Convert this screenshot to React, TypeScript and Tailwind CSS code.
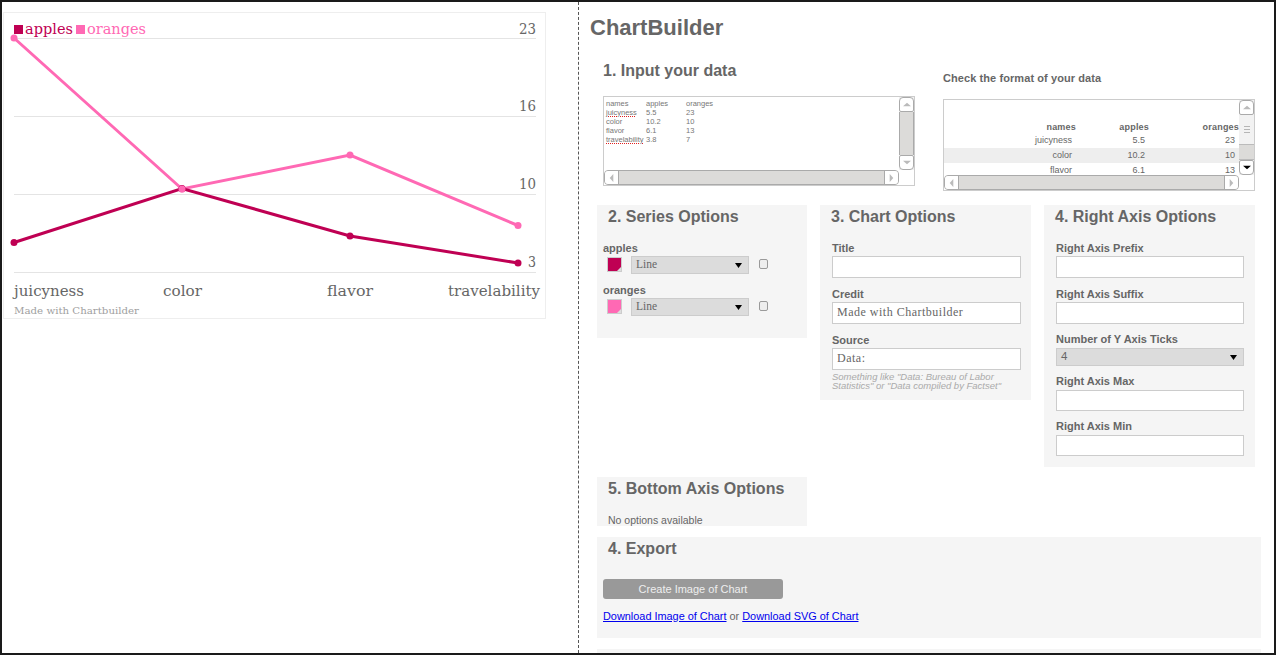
const APPLES = '#bf0053'
const ORANGES = '#ff69b4'

const gridLines = [38, 116, 194, 272]
const ticks = [
  { label: '23', y: 34, width: 17 },
  { label: '16', y: 111, width: 17 },
  { label: '10', y: 189, width: 17 },
  { label: '3', y: 267, width: 8 },
]
const applePoints = [[14, 242.5], [182, 188.5], [350, 236], [518, 263]]
const orangePoints = [[14, 38], [182, 189], [350, 155], [518, 225.5]]
const chartFont = { fontFamily: '"DejaVu Serif", serif' }

function Chart() {
  return (
    <div className="ml-px mt-[10px] w-[543px] h-[307px] border border-[#eeeeee] bg-white">
      <svg width="541" height="305" viewBox="4 13 541 305" className="block" style={chartFont}>
        {gridLines.map(y => (
          <line key={y} x1="14" x2="536" y1={y + 0.5} y2={y + 0.5} stroke="#e4e4e4" />
        ))}
        {ticks.map(t => (
          <text key={t.label} x={536 - t.width} y={t.y} fontSize="15" fill="#666666" textLength={t.width} lengthAdjust="spacingAndGlyphs">{t.label}</text>
        ))}
        <polyline points={orangePoints.join(' ')} fill="none" stroke={ORANGES} strokeWidth="3" />
        {orangePoints.map(([x, y]) => <circle key={x} cx={x} cy={y} r="3.5" fill={ORANGES} />)}
        <polyline points={applePoints.join(' ')} fill="none" stroke={APPLES} strokeWidth="3" />
        {applePoints.map(([x, y]) => <circle key={x} cx={x} cy={y} r="3.5" fill={APPLES} />)}
        <circle cx="182" cy="189" r="3.5" fill={ORANGES} />

        <rect x="14" y="25" width="9" height="9" fill={APPLES} />
        <text x="25" y="34" fontSize="15" fill={APPLES} textLength="48" lengthAdjust="spacingAndGlyphs">apples</text>
        <rect x="76" y="25" width="9" height="9" fill={ORANGES} />
        <text x="87" y="34" fontSize="15" fill={ORANGES} textLength="59" lengthAdjust="spacingAndGlyphs">oranges</text>

        <text x="14" y="296" fontSize="15" fill="#666666" textLength="70" lengthAdjust="spacingAndGlyphs">juicyness</text>
        <text x="163" y="296" fontSize="15" fill="#666666" textLength="39" lengthAdjust="spacingAndGlyphs">color</text>
        <text x="327" y="296" fontSize="15" fill="#666666" textLength="46" lengthAdjust="spacingAndGlyphs">flavor</text>
        <text x="448" y="296" fontSize="15" fill="#666666" textLength="92" lengthAdjust="spacingAndGlyphs">travelability</text>
        <text x="14" y="314" fontSize="10" fill="#a0a0a0" textLength="125" lengthAdjust="spacingAndGlyphs">Made with Chartbuilder</text>
      </svg>
    </div>
  )
}

function Arrow({ dir, color = '#9a9a9a', large }: { dir: 'up' | 'down' | 'left' | 'right'; color?: string; large?: boolean }) {
  const points = {
    up: '0,6 5,1 10,6',
    down: '0,1 5,6 10,1',
    left: '6,0 1,5 6,10',
    right: '1,0 6,5 1,10',
  }[dir]
  const vertical = dir === 'up' || dir === 'down'
  const size = large ? 'w-[7px] h-[7px]' : vertical ? 'w-[8px] h-[5px]' : 'w-[5px] h-[8px]'
  return (
    <svg viewBox={vertical ? '0 0 10 7' : '0 0 7 10'} preserveAspectRatio="none" className={size}>
      <polygon points={points} fill={color} />
    </svg>
  )
}

function VScroll({ format }: { format?: boolean }) {
  return (
    <div className="w-[15px] flex flex-col shrink-0 bg-[#f2f2f2]">
      <div className="h-[15px] bg-white border border-[#aaaaaa] rounded-t-[4px] rounded-b-[2px] flex items-center justify-center">
        <Arrow dir="up" color="#bbbbbb" />
      </div>
      {format ? (
        <div className="flex-1 flex flex-col">
          <div className="h-[29px] bg-[#f2f2f2] flex flex-col items-center justify-center gap-[2px]">
            <div className="w-[6px] h-px bg-[#b5b5b5]" />
            <div className="w-[6px] h-px bg-[#b5b5b5]" />
            <div className="w-[6px] h-px bg-[#b5b5b5]" />
          </div>
          <div className="flex-1 bg-[#dcdbd9] border-y border-[#bbbbbb]" />
        </div>
      ) : (
        <div className="flex-1 bg-[#dcdbd9] border-x border-[#aaaaaa]" />
      )}
      <div className="h-[15px] bg-white border border-[#aaaaaa] rounded-b-[4px] rounded-t-[2px] flex items-center justify-center">
        <Arrow dir="down" color={format ? '#000000' : '#bbbbbb'} />
      </div>
    </div>
  )
}

function HScroll() {
  return (
    <div className="flex h-[15px]">
      <div className="flex-1 flex border border-[#aaaaaa] rounded-[4px] overflow-hidden bg-[#dcdbd9]">
        <div className="w-[14px] bg-white border-r border-[#aaaaaa] flex items-center justify-center">
          <Arrow dir="left" color="#bbbbbb" />
        </div>
        <div className="flex-1" />
        <div className="w-[14px] bg-white border-l border-[#aaaaaa] flex items-center justify-center">
          <Arrow dir="right" color="#bbbbbb" />
        </div>
      </div>
      <div className="w-[15px] bg-white" />
    </div>
  )
}

const rawRows = [
  ['names', 'apples', 'oranges'],
  ['juicyness', '5.5', '23'],
  ['color', '10.2', '10'],
  ['flavor', '6.1', '13'],
  ['travelability', '3.8', '7'],
]
const misspelled = ['juicyness', 'travelability']

function InputBox() {
  return (
    <div className="h-[90px] border border-[#cccccc] bg-white flex flex-col">
      <div className="flex-1 flex min-h-0">
        <div className="flex-1 pl-[2px] pt-[2px] text-[7.5px] leading-[9px] text-[#777777]">
          {rawRows.map(row => (
            <div key={row[0]} className="flex">
              <span className={`w-[40px] whitespace-nowrap ${misspelled.includes(row[0]) ? 'underline decoration-dotted decoration-[#e02020] decoration-1 underline-offset-[1px]' : ''}`}>{row[0]}</span>
              <span className="w-[40px]">{row[1]}</span>
              <span>{row[2]}</span>
            </div>
          ))}
        </div>
        <VScroll />
      </div>
      <HScroll />
    </div>
  )
}

function FormatBox() {
  return (
    <div className="h-[92px] border border-[#cccccc] bg-white flex flex-col">
      <div className="flex-1 flex min-h-0">
        <div className="flex-1 pt-[21px] text-[9px] text-[#666666] overflow-hidden">
          <div className="flex h-[12px] leading-[12px] font-bold tracking-[0.2px]">
            <span className="w-[132px] text-right">names</span>
            <span className="w-[73px] text-right">apples</span>
            <span className="w-[90px] text-right">oranges</span>
          </div>
          {rawRows.slice(1, 4).map((row, i) => (
            <div key={row[0]} className={`flex h-[15px] leading-[15px] ${i === 1 ? 'bg-[#eeeeee]' : ''}`}>
              <span className="w-[128px] text-right">{row[0]}</span>
              <span className="w-[73px] text-right">{row[1]}</span>
              <span className="w-[90px] text-right">{row[2]}</span>
            </div>
          ))}
        </div>
        <VScroll format />
      </div>
      <HScroll />
    </div>
  )
}

function Heading({ children }: { children: string }) {
  return <h3 className="h-[22px] leading-[22px] pt-px pl-[11px] text-[16px] font-bold text-[#666666]">{children}</h3>
}

function Label({ children, className = '' }: { children: string; className?: string }) {
  return <div className={`h-[12px] leading-[12px] text-[11px] font-bold text-[#666666] ${className}`}>{children}</div>
}

function TextField({ value = '', className = 'h-[22px] mt-[2px]' }: { value?: string; className?: string }) {
  return (
    <input
      readOnly
      value={value}
      className={`block w-full border border-[#cccccc] bg-white px-[4px] pb-[2px] text-[12px] text-[#666666] tracking-[0.5px] [font-family:'Liberation_Serif',serif] ${className}`}
    />
  )
}

function SelectBox({ value, className = '' }: { value: string; className?: string }) {
  return (
    <div className={`flex items-center justify-between h-[18px] bg-[#dcdcdc] border border-[#cccccc] pl-[4px] pr-[6px] ${className}`}>
      <span className="text-[11.5px] text-[#666666]">{value}</span>
      <Arrow dir="down" color="#000000" large />
    </div>
  )
}

function SeriesRow({ name, color, className = '' }: { name: string; color: string; className?: string }) {
  return (
    <div className={className}>
      <Label>{name}</Label>
      <div className="flex items-start h-[18px] mt-[2px]">
        <div className="relative mt-px ml-[4px] w-[15px] h-[15px] border border-[#cccccc]" style={{ backgroundColor: color }}>
          <div className="absolute right-0 bottom-0 w-[4px] h-[4px] bg-[#dddddd] [clip-path:polygon(100%_0,100%_100%,0_100%)]" />
        </div>
        <SelectBox value="Line" className="ml-[9px] w-[118px] [font-family:'Liberation_Serif',serif]" />
        <input type="checkbox" readOnly className="mt-[3px] ml-[10px] appearance-none w-[9px] h-[10px] rounded-[2px] border border-[#9a9a9a] bg-[#eeeeee]" />
      </div>
    </div>
  )
}

export default function App() {
  return (
    <div className="w-[1276px] h-[655px] border-2 border-[#1a1a1a] bg-white flex overflow-hidden [font-family:'Liberation_Sans',Arial,sans-serif]">
      <div className="w-[576px] shrink-0">
        <Chart />
      </div>

      <div className="flex-1 border-l border-dashed border-[#555555] pl-[18px] pr-[13px] overflow-hidden">
        <div className="h-[48px] pt-[14px] -ml-[7px]">
          <h1 className="text-[22px] leading-[24px] font-bold text-[#666666]">ChartBuilder</h1>
        </div>

        {/* data input */}
        <div className="h-[155px] ml-[6px] grid grid-cols-[312px_312px] gap-x-[28px]">
          <div className="pt-[11px]">
            <h2 className="h-[20px] leading-[20px] text-[16px] font-bold text-[#666666] mb-[15px]">1. Input your data</h2>
            <InputBox />
          </div>
          <div className="pt-[21px]">
            <h4 className="h-[14px] leading-[14px] text-[11px] font-bold tracking-[0.08px] text-[#666666] mb-[14px]">Check the format of your data</h4>
            <FormatBox />
          </div>
        </div>

        {/* options */}
        <div className="grid grid-cols-[210px_211px_211px] gap-x-[13px] gap-y-[10px] items-start">
          <section className="bg-[#f5f5f5] h-[133px]">
            <Heading>2. Series Options</Heading>
            <div className="pl-[6px] pt-[15px]">
              <SeriesRow name="apples" color={APPLES} />
              <SeriesRow name="oranges" color={ORANGES} className="mt-[10px]" />
            </div>
          </section>

          <section className="bg-[#f5f5f5] h-[195px]">
            <Heading>3. Chart Options</Heading>
            <div className="pl-[12px] pr-[10px] pt-[15px]">
              <Label>Title</Label>
              <TextField />
              <Label className="mt-[10px]">Credit</Label>
              <TextField value="Made with Chartbuilder" />
              <Label className="mt-[10px]">Source</Label>
              <TextField value="Data:" />
              <p className="mt-[2px] text-[9.5px] leading-[9px] italic text-[#aaaaaa]">
                Something like "Data: Bureau of Labor Statistics" or "Data compiled by Factset"
              </p>
            </div>
          </section>

          <section className="bg-[#f5f5f5] h-[262px]">
            <Heading>4. Right Axis Options</Heading>
            <div className="pl-[12px] pr-[11px] pt-[15px]">
              <Label>Right Axis Prefix</Label>
              <TextField />
              <Label className="mt-[10px]">Right Axis Suffix</Label>
              <TextField />
              <Label className="mt-[9px]">Number of Y Axis Ticks</Label>
              <SelectBox value="4" className="mt-[3px]" />
              <Label className="mt-[9px]">Right Axis Max</Label>
              <TextField className="h-[21px] mt-[3px]" />
              <Label className="mt-[9px]">Right Axis Min</Label>
              <TextField className="h-[21px] mt-[3px]" />
            </div>
          </section>

          <section className="bg-[#f5f5f5] h-[49px] col-start-1 overflow-hidden">
            <Heading>5. Bottom Axis Options</Heading>
            <p className="mt-[15px] pl-[11px] h-[12px] leading-[12px] text-[10.5px] text-[#666666]">No options available</p>
          </section>
        </div>

        {/* export */}
        <section className="mt-[11px] h-[101px] bg-[#f5f5f5]">
          <Heading>4. Export</Heading>
          <div className="pl-[6px]">
            <button className="mt-[20px] block w-[180px] h-[20px] rounded-[3px] bg-[#999999] text-[11px] text-[#eeeeee]">Create Image of Chart</button>
            <p className="mt-[11px] h-[12px] leading-[12px] text-[10.9px] text-[#666666]">
              <a href="#" className="text-[#0000ee] underline">Download Image of Chart</a> or <a href="#" className="text-[#0000ee] underline">Download SVG of Chart</a>
            </p>
          </div>
        </section>
        <div className="mt-[11px] h-[10px] bg-[#f5f5f5]" />
      </div>
    </div>
  )
}
